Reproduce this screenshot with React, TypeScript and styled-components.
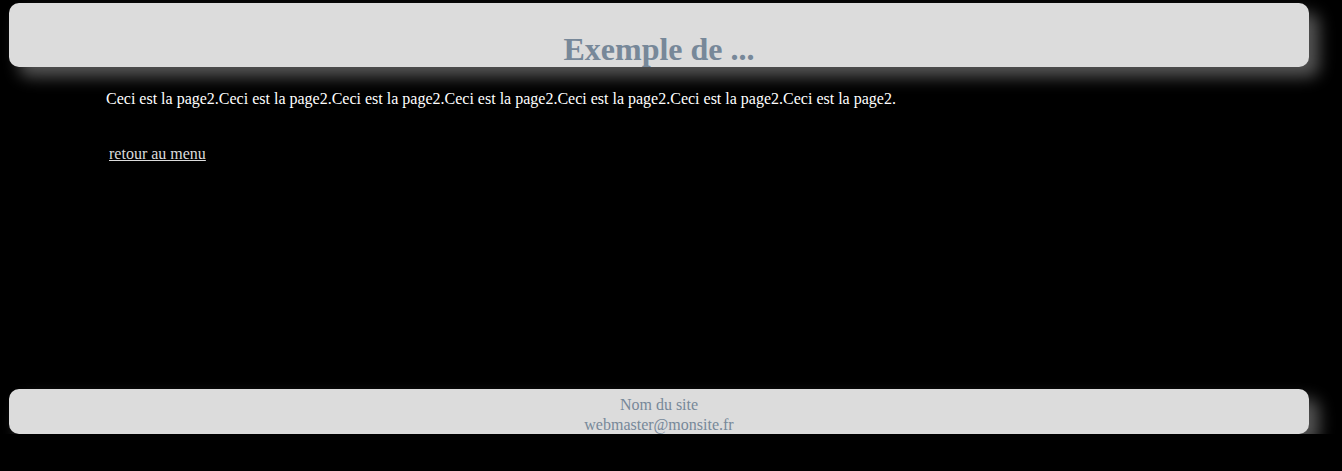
import React from "react";
import styled, { createGlobalStyle } from "styled-components";

const Global = createGlobalStyle`
  html, body { margin: 0; padding: 0; background: #000; }
  body { font-family: "Liberation Serif", "Times New Roman", serif; font-size: 16px; color: #fff; }
`;

const Page = styled.div`
  display: flex;
  flex-direction: column;
  padding: 3px 0 0 9px;
`;

const Panel = styled.div<{ $h: number }>`
  box-sizing: border-box;
  width: 1300px;
  height: ${(p) => p.$h}px;
  background: #dcdcdc;
  border-radius: 10px;
  box-shadow: 10px 10px 16px #555555;
  text-align: center;
  color: #778899;
`;

const Header = styled(Panel)`
  padding-top: 28px;
`;

const Title = styled.h1`
  margin: 0;
  font-size: 32px;
  line-height: 36px;
  font-weight: bold;
`;

const Content = styled.div`
  display: flex;
  flex-direction: column;
  align-items: flex-start;
  padding-left: 97px;
  height: 322px;
`;

const Para = styled.p`
  margin: 23px 0 0 0;
  line-height: 18px;
`;

const BackLink = styled.a`
  margin: 37px 0 0 3px;
  line-height: 18px;
  color: #dcdcdc;
  text-decoration: underline;
`;

const Footer = styled(Panel)`
  padding-top: 6px;
  line-height: 20px;
`;

export default function App() {
  const text = Array(7).fill("Ceci est la page2.").join("");
  return (
    <>
      <Global />
      <Page>
        <Header $h={64}>
          <Title>Exemple de ...</Title>
        </Header>
        <Content>
          <Para>{text}</Para>
          <BackLink href="#">retour au menu</BackLink>
        </Content>
        <Footer $h={45}>
          <div>Nom du site</div>
          <div>webmaster@monsite.fr</div>
        </Footer>
      </Page>
    </>
  );
}
